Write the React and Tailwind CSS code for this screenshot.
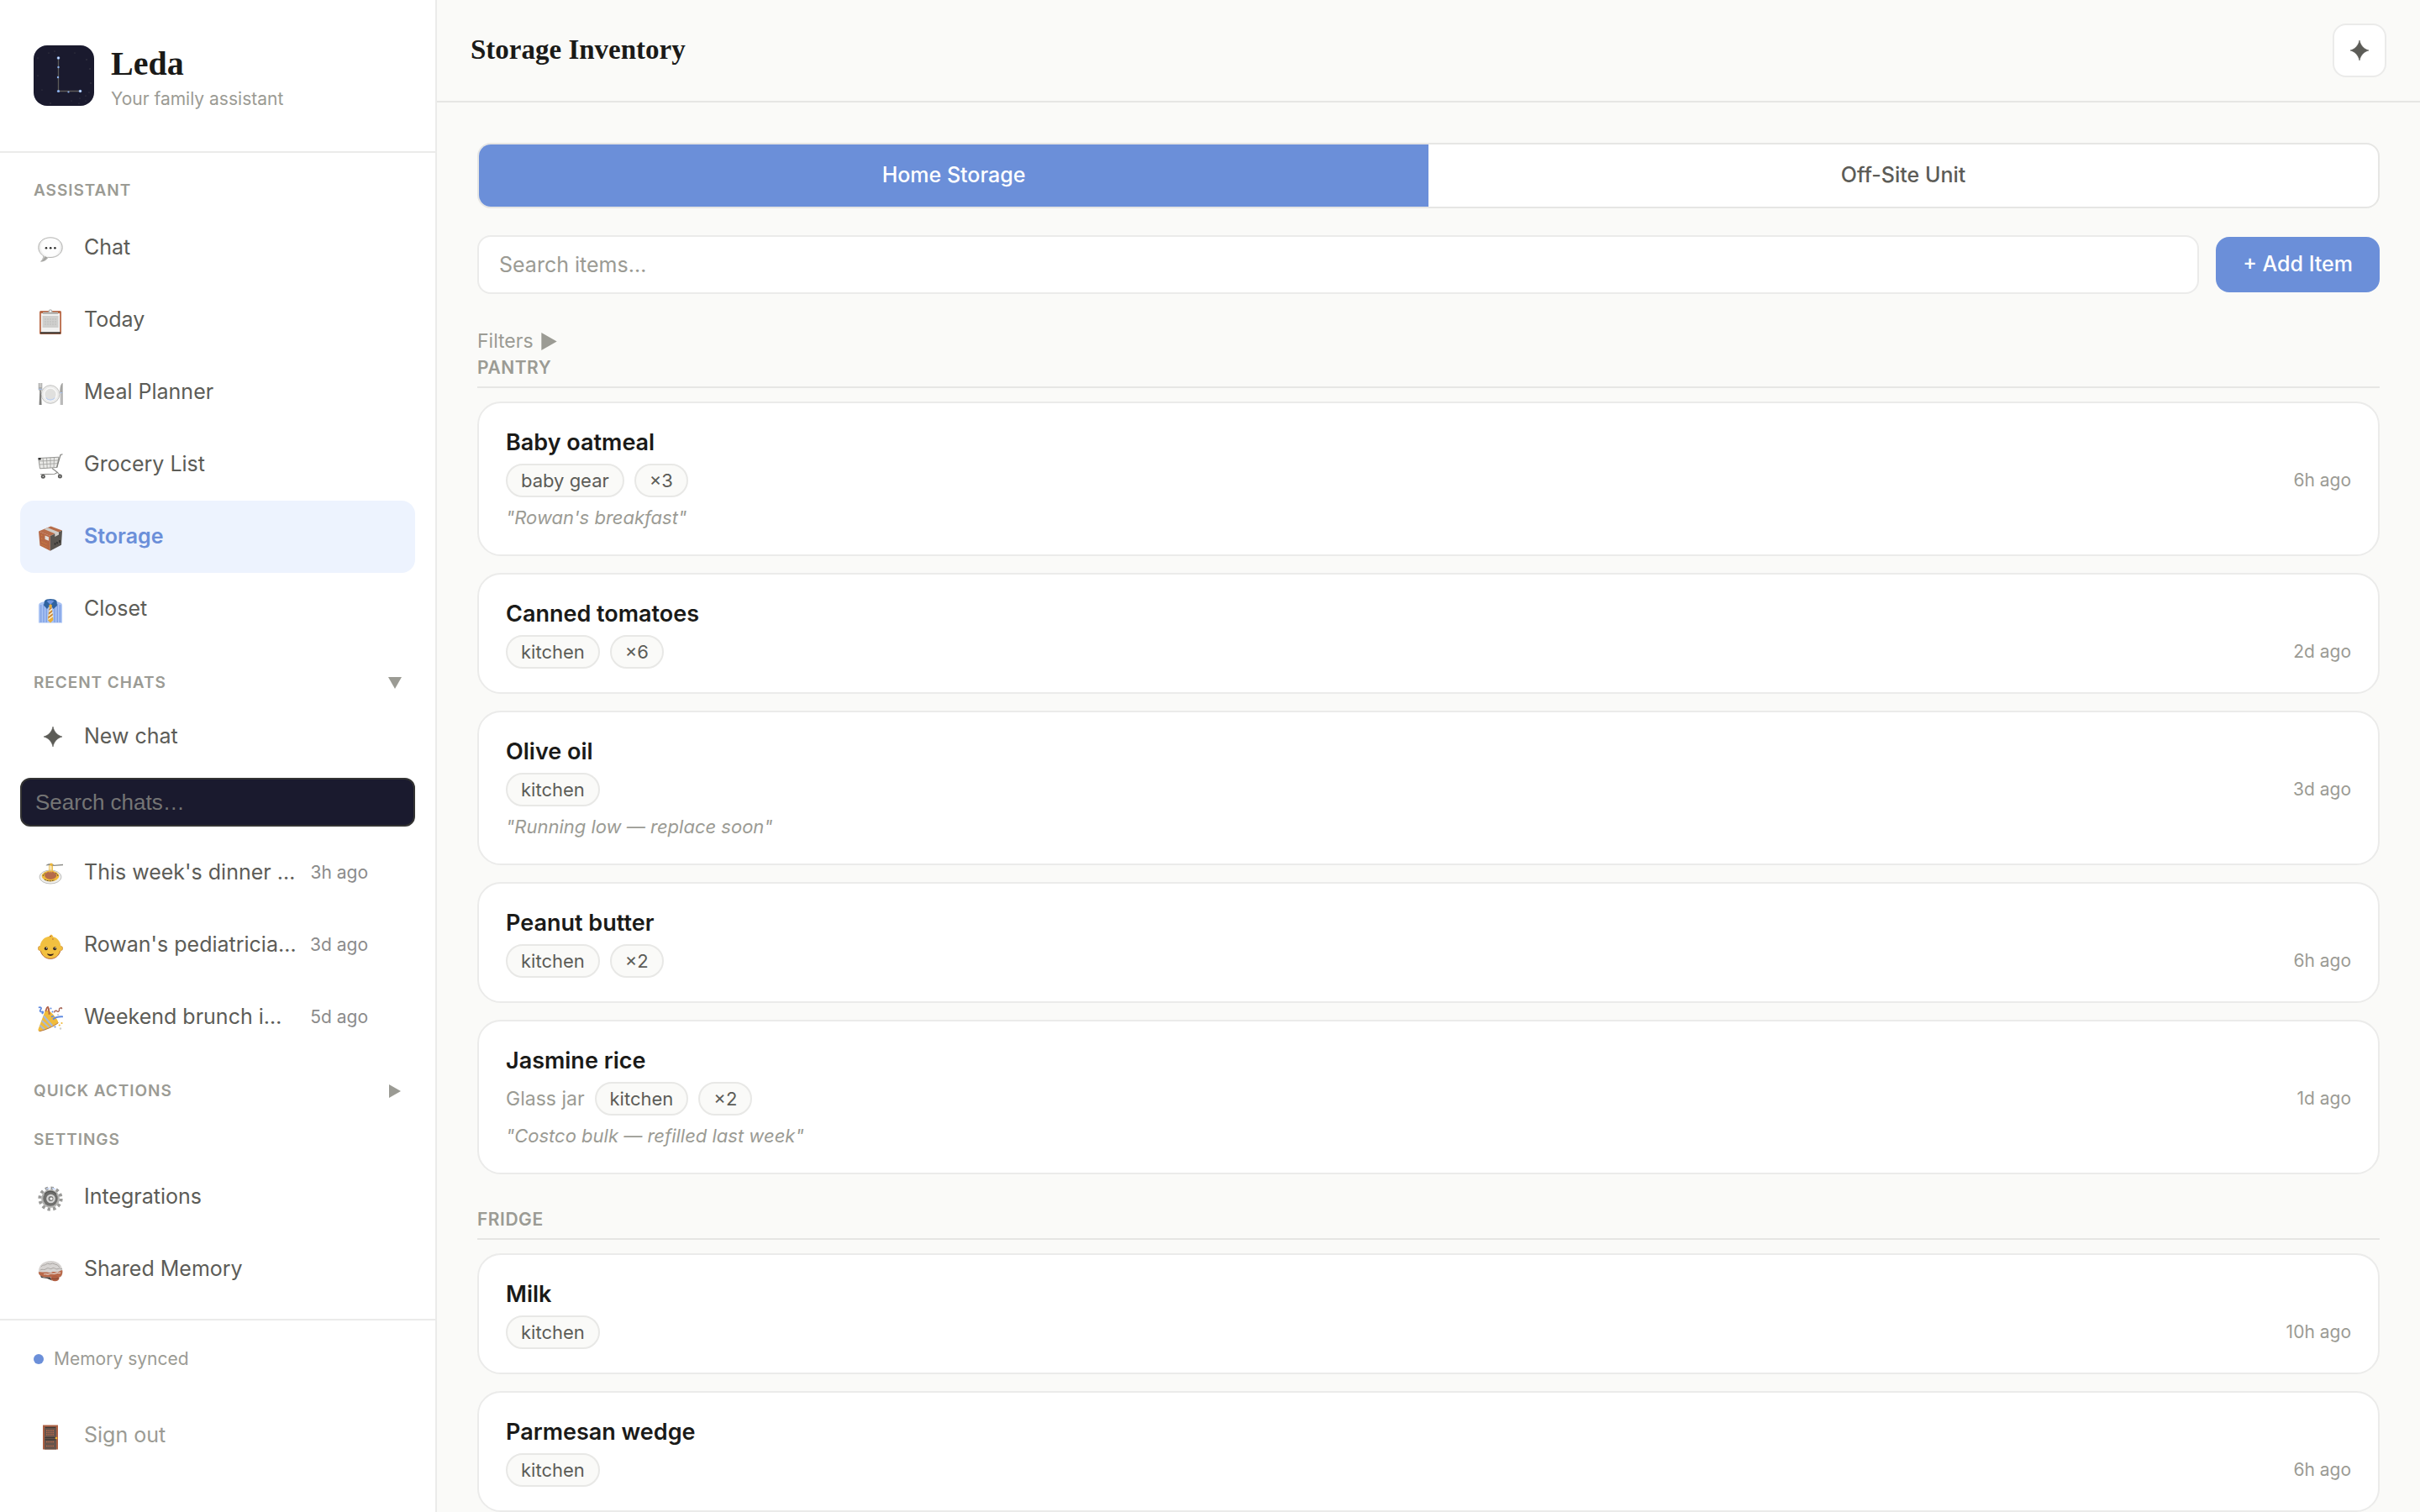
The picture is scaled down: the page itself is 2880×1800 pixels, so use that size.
import React, { useState } from "react";

function Glyph({ children }) {
  return (
    <svg viewBox="0 0 30 30" className="mt-1 size-[30px] shrink-0" aria-hidden="true">
      {children}
    </svg>
  );
}

const ChatIcon = () => (
  <Glyph>
    <defs>
      <radialGradient id="bubble" cx="0.5" cy="0.4" r="0.62">
        <stop offset="0.6" stopColor="#fdfdfd" />
        <stop offset="1" stopColor="#c6c6c4" />
      </radialGradient>
    </defs>
    <path d="M15 .8C6.8.8.8 5.8.8 12.600c0 4.500 2.400 8 6 10.100-.2 2.600-1.300 4.800-3.200 6.600 3.600-.2 6.600-1.900 8.600-4.900 1 .1 1.800.1 2.800.1 8.200 0 14.200-5 14.200-11.900S23.200.8 15 .8Z" fill="url(#bubble)" stroke="#b4b4b2" strokeWidth="1" />
    <path d="M4 29c3-2 4-4.500 3.900-6l4 1.400c-2 2.800-4.700 4.400-7.900 4.600Z" fill="#a3a3a0" />
    <g fill="#2d2d2b">
      <circle cx="10" cy="13.200" r="1.300" />
      <circle cx="15.200" cy="13.200" r="1.300" />
      <circle cx="20.400" cy="13.200" r="1.300" />
    </g>
  </Glyph>
);

const ClipboardIcon = () => (
  <Glyph>
    <rect x="2" y="2" width="26" height="28" rx="1.500" fill="#b96a48" />
    <rect x="3.800" y="5" width="22.400" height="22.500" fill="#f1f1f0" />
    <rect x="5.500" y="8" width="19" height="14" fill="#cfcfcd" />
    <path d="M8 12h14M8 15h14M8 18h14" stroke="#bdbdba" strokeDasharray="2 1" />
    <path d="M3 28.300h24" stroke="#3a3a38" strokeWidth="2" />
    <path d="M6 6V3.500h6.500C12.500 1 13.600.3 15 .3s2.500.7 2.500 3.200H24V6Z" fill="#b4b4b1" />
    <circle cx="15" cy="2.600" r="1.100" fill="#fff" />
  </Glyph>
);

const MealIcon = () => (
  <Glyph>
    <circle cx="15" cy="15.500" r="10.800" fill="#ececeb" stroke="#c4c4c2" />
    <circle cx="15" cy="15.500" r="7.300" fill="#e0e0de" stroke="#fafafa" strokeWidth="1.300" />
    <path d="M9.500 19.500a7 7 0 0 0 11 0" fill="none" stroke="#b9cdf0" strokeWidth="1.200" />
    <path d="M.7 2h4.600v7.500L4 11.500H2L.7 9.500Z" fill="#a9a9a7" />
    <path d="M2.200 2v5M3.800 2v5" stroke="#f5f5f5" strokeWidth=".6" />
    <path d="M2.300 11h1.500l.8 17H1.600Z" fill="#7e7e7c" />
    <path d="M.9 9.300h4.200" stroke="#a7c0ee" />
    <path d="M29.300 2c-2.200 1-3 5.500-3 11.500h2V28h1.400V2Z" fill="#a5a5a3" />
    <path d="M26.600 13.500h2.800L29.600 28h-2.900Z" fill="#bababa" />
    <path d="M26.400 13.600h3" stroke="#a7c0ee" />
  </Glyph>
);

const CartIcon = () => (
  <Glyph>
    <path d="M.8 5.500 25 4.200l-2.300 12.300-20.200 1.300Z" fill="#e9e9e7" stroke="#8c8c89" strokeWidth=".9" />
    <path d="M1.500 9 24.300 8M2 13l21.500-1.300M6 5.300l1.200 12.200M10.500 5l.7 12.200M15 4.800V17M19.500 4.600 19 16.600" stroke="#9d9d9a" strokeWidth=".8" />
    <path d="M29.500.7 27 1.500 22.700 16.500" fill="none" stroke="#80807d" strokeWidth="1.200" />
    <path d="M17 17.500 23.500 22.500 20 24.300 3 24.800M23.500 22.500l2 2.500" fill="none" stroke="#8a8a87" strokeWidth="1.100" />
    <path d="M.5 5h3.200v2.400H.8Z" fill="#333" />
    <circle cx="6.300" cy="27.300" r="2.500" fill="#5a5a58" />
    <circle cx="26.400" cy="27" r="2.500" fill="#5a5a58" />
    <circle cx="6.300" cy="27.300" r=".8" fill="#ddd" />
    <circle cx="26.400" cy="27" r=".8" fill="#ddd" />
  </Glyph>
);

const BoxIcon = () => (
  <Glyph>
    <path d="M1 6.500 15.500.5 29 5.500 14.800 12Z" fill="#b76c49" />
    <path d="M1 6.500 14.800 12v17.700L2.500 23.500Z" fill="#b56643" />
    <path d="M14.800 12 29 5.500 28 22.800 14.800 29.700Z" fill="#595550" />
    <path d="m7.500 4 4.300-1.800L25 7.400v3.200L20.300 13V9.200Z" fill="#cfccc8" />
    <path d="M8.500 11.500 13 13.300v4.500L8.500 16Z" fill="#e0dcd8" />
    <path d="m4 11 2.500 1M4 15l2.500 1M4.500 19l7 3M4.500 22.500l7 3.200" stroke="#d8953e" strokeWidth=".8" strokeDasharray="1.300 1.200" />
    <path d="M20.500 22.500v-2M23 21.300v-2M26 20v-3" stroke="#222" strokeWidth="1.300" />
  </Glyph>
);

const ShirtIcon = () => (
  <Glyph>
    <path d="M1 9C1 6 3.500 5 8 4h14c4.500 1 7 2 7 5v20.500H1Z" fill="#a9c3f3" />
    <path d="M3.800 8v21M7 7v22M10.200 8v21M20 8v21M23.200 7v22M26.400 8v21" stroke="#7496e0" strokeWidth="1.100" />
    <path d="M8 3.500C10 .3 20 .3 22.500 3.500L23 9l-4.500 4L15 8l-4 5-4-4.500Z" fill="#2f629f" />
    <path d="M10.500 3.500c2-1.500 7-1.500 9 0L15 8Z" fill="#6c93e0" />
    <path d="m13.200 8.500 1.900-1.200 1.900 1.200-.6 2.700 2 14.800-3.400 3.500L11.800 26l2-14.800Z" fill="#ecae35" />
    <path d="m13.300 16 3.600-3M12.700 21l5-4M12.400 25.500l5.800-4.300" stroke="#f6f0e2" strokeWidth="1.200" />
    <path d="m13.400 14 3-2.500M13 18.700l4.300-3.400M12.600 23.300l5-4" stroke="#a76045" strokeWidth=".9" />
  </Glyph>
);

const PastaIcon = () => (
  <Glyph>
    <ellipse cx="15" cy="18" rx="13" ry="8" fill="#efefee" stroke="#bfbfbd" />
    <ellipse cx="15" cy="17" rx="10.300" ry="6.500" fill="#f0b93a" />
    <path d="M6 17c1-2 2-3 4-4M8 21c3 2 8 2.500 12 .5M24 17c-.5-2-1.500-3-3-3.800" fill="none" stroke="#4f4a3a" strokeWidth=".9" strokeDasharray="2 1" />
    <ellipse cx="15.200" cy="16.300" rx="7" ry="4.700" fill="#b56b4b" />
    <path d="M13.700 12.500V4M16 12.500V3M17.500 11V4" stroke="#eec04c" strokeWidth="1.100" />
    <path d="M9.500 4.500c2-2.500 6-3 8-2l2 1.200L30 2.800v1.400L19 5l-4-1Z" fill="#8b8b86" />
    <circle cx="16" cy="3.200" r="1.700" fill="#edb63a" />
  </Glyph>
);

const BabyIcon = () => (
  <Glyph>
    <circle cx="3" cy="17" r="2.700" fill="#f0bd3d" stroke="#c98a3f" strokeWidth=".6" />
    <circle cx="27" cy="17" r="2.700" fill="#f0bd3d" stroke="#c98a3f" strokeWidth=".6" />
    <path d="M15 2.800C22 2.800 27.500 8 27.500 16.500 27.500 24 22 29.500 15 29.500S2.500 24 2.500 16.500C2.500 8 8 2.800 15 2.800Z" fill="#f2c040" />
    <path d="M3.300 20C5 26 9.500 29.400 15 29.400S25 26 26.700 20" fill="none" stroke="#b2613a" strokeWidth=".9" />
    <path d="M12.300 4C13.500 2.800 14.500 1.700 15.800.5c1.700.5 2.700 2 2.200 3.800Z" fill="#efb93c" />
    <path d="M14 2.600h2M17 6h1.800" stroke="#b5673f" />
    <circle cx="9.800" cy="17.300" r="2" fill="#332822" />
    <circle cx="20.200" cy="17.300" r="2" fill="#332822" />
    <circle cx="10.500" cy="16.600" r=".7" fill="#fff" />
    <circle cx="20.900" cy="16.600" r=".7" fill="#fff" />
    <path d="M11 23.300c2.500.9 5.500.9 8 0-.6 2-2 2.600-4 2.600s-3.400-.6-4-2.600Z" fill="#3b211a" />
  </Glyph>
);

const PartyIcon = () => (
  <Glyph>
    <path d="M8.500 6C10 3.500 14 5 18 9.500s7 8.500 6 10.500C19 24 8 28.500 1.500 29.800.3 29 .3 28 .6 27Z" fill="#f0bb3b" />
    <path d="m7 11.500 10.500 12M4.800 17l9 8.500M2.600 22.500l6 5.500" stroke="#a9b9d6" strokeWidth="2.200" />
    <path d="M24.500 19.500C19 24 8 28.500 1.500 29.800" fill="none" stroke="#b9793f" />
    <path d="M9 6C11 3.500 9.500 2 12 .7c2 2.800 1.500 5.300 1.500 9M12.500 2.500l1.500 7" fill="none" stroke="#b26349" strokeWidth="1.800" />
    <path d="M.8 1.500c3-1 4 .5 2.500 2.500s0 3 2.200 2.500-.5 2.500-.5 2.500M18 15.500c3-3 6-3.500 12-3.200M16 12.500l3-1" fill="none" stroke="#5f8ae0" strokeWidth="1.800" />
    <path d="M19.500 7.500c.5-3 3-2.500 3.500-1.500s3 0 2.500-2 2-2.500 3.500-1M28 1v2" fill="none" stroke="#a8695a" strokeWidth="1.400" />
    <g>
      <circle cx="15.500" cy="2.600" r="1" fill="#5f8ae0" />
      <circle cx="17.500" cy="6.500" r="1" fill="#5f8ae0" />
      <circle cx="24" cy="10" r=".9" fill="#c3c3c0" />
      <circle cx="28.500" cy="20" r="1.100" fill="#f0bb3b" />
      <circle cx="25.800" cy="22.500" r="1.100" fill="#f0bb3b" />
      <circle cx="27" cy="26.500" r="1.200" fill="#cfcfcd" />
      <circle cx="20.500" cy="24.500" r="1" fill="#5f8ae0" />
    </g>
  </Glyph>
);

const GearIcon = () => (
  <Glyph>
    <circle cx="15" cy="15" r="12.600" fill="none" stroke="#9a9a98" strokeWidth="4" strokeDasharray="3.300 3.300" />
    <circle cx="15" cy="15" r="10.800" fill="#b3b3b1" />
    <circle cx="15" cy="15" r="8.700" fill="#6e6e6c" />
    <path d="M8 9.800a8.700 8.700 0 0 1 14 0" fill="none" stroke="#565654" strokeWidth="1.300" />
    <circle cx="15.500" cy="15" r="5.300" fill="#d4d4d3" />
    <circle cx="15.500" cy="15" r="3" fill="#7a7a78" />
    <circle cx="16" cy="15" r="1.600" fill="#fff" />
    <path d="M10 3.600l4-1.500M17 2.500l4 1.300" stroke="#c5d6f7" strokeWidth="1.500" />
  </Glyph>
);

const BrainIcon = () => (
  <Glyph>
    <path d="M.8 16C1 8 7 3 15.500 3S29.500 8.500 29.500 16c0 3.500-1 6-3.500 6.500H9C4 22 .8 20 .8 16Z" fill="#d6d3d1" />
    <path d="M.8 16.500c3-1 5 .5 8 0s5 1.500 8 0 5 1.200 8-.5 3-2 4.500-1.500c.3 4-1 7.500-3.500 8H10C4.500 22.500 1 20 .8 16.500Z" fill="#b9694a" />
    <path d="M4 10c2-3 4-1 6-3s4 1 6-.5 4 1 6 1 2 2.500 4 3M3 14c3-2 4 1 7-1.500s4 1.500 7-.5 4 2 7 .5 3 1 5 0" fill="none" stroke="#aaa6a3" strokeWidth="1" />
    <path d="M7 19c3-1 4 1 7-.5s4 1 7-.5 4 .5 6-1" fill="none" stroke="#e2d3cb" strokeWidth="1.200" />
    <path d="M3 20.500 7 22.500h8l2 4-6-2.500-7-1Z" fill="#474341" />
    <ellipse cx="20.500" cy="23.800" rx="5" ry="3.400" fill="#b05f42" />
    <path d="M16.500 24c2.500 1 5.500 1 8.500-.5" fill="none" stroke="#7d4633" />
  </Glyph>
);

const DoorIcon = () => (
  <Glyph>
    <rect x="6" y=".5" width="18" height="29" fill="#ad6042" />
    <rect x="8" y="2.500" width="14" height="27" fill="#67544b" />
    <path d="M10 7h10M10 9.500h10M10 12h10M10 20.500h10M10 25.500h10" stroke="#b9694a" strokeWidth="1.300" strokeDasharray="1.500 1" />
    <path d="M8.500 15.500h13M8.500 17.800h13M9 3.500h12" stroke="#3d3733" strokeWidth="1.200" />
    <circle cx="22" cy="16" r="1.300" fill="#efb62f" />
  </Glyph>
);

const star = "M12 0C13 5.500 17 10.500 23 12 17 13.500 13 18.500 12 24 11 18.500 7 13.500 1 12 7 10.500 11 5.500 12 0Z";

const StarIcon = () => (
  <svg viewBox="0 0 24 24" className="size-6 shrink-0" fill="#5c5c57" stroke="#5c5c57" strokeWidth=".6" aria-hidden="true">
    <path d={star} />
  </svg>
);

const NewChatIcon = () => (
  <span className="flex w-[30px] shrink-0 justify-end">
    <StarIcon />
  </span>
);

function Triangle({ down, className }) {
  return (
    <svg viewBox="0 0 16 16" className={className} fill="#9b9b94" aria-hidden="true">
      <path d={down ? "M0 1h16L8 15Z" : "M1 0v16L15 8Z"} />
    </svg>
  );
}

function Logo() {
  return (
    <svg viewBox="0 0 72 72" className="size-[72px] shrink-0" aria-hidden="true">
      <rect width="72" height="72" rx="16" fill="#1a1a2e" />
      <path d="M29.500 15v39.500h26" fill="none" stroke="#5b5a58" strokeWidth="1.300" />
      <g fill="#8db2ee">
        <circle cx="29.500" cy="15" r="1.800" />
        <circle cx="29.500" cy="26" r="1.200" />
        <circle cx="29" cy="38" r="1.200" />
        <circle cx="29.500" cy="54.500" r="1.600" />
        <circle cx="41.500" cy="55.500" r="1.100" />
        <circle cx="55.500" cy="54.500" r="1.800" />
      </g>
      <circle cx="29.500" cy="15" r=".8" fill="#fff" />
      <circle cx="55.500" cy="54.500" r=".8" fill="#fff" />
      <g fill="#4a4a52">
        <circle cx="18" cy="9" r=".6" />
        <circle cx="25" cy="7" r=".6" />
        <circle cx="49" cy="9" r=".6" />
        <circle cx="63" cy="17" r=".7" />
        <circle cx="67" cy="28" r=".7" />
        <circle cx="5" cy="15" r=".6" />
        <circle cx="5" cy="36" r=".6" />
        <circle cx="10" cy="53" r=".6" />
        <circle cx="20" cy="69" r=".7" />
        <circle cx="45" cy="66" r=".6" />
        <circle cx="55" cy="63" r=".6" />
        <circle cx="54" cy="69" r=".6" />
        <circle cx="62" cy="66" r=".6" />
        <circle cx="66" cy="56" r=".6" />
        <circle cx="68" cy="45" r=".7" />
        <circle cx="62" cy="60" r=".6" />
      </g>
    </svg>
  );
}

function NavLabel({ children, className }) {
  return (
    <h2
      className={
        "flex h-[50px] items-center px-4 text-[19px] font-semibold uppercase tracking-wider text-[#9b9b94] " + className
      }
    >
      {children}
    </h2>
  );
}

function NavToggle({ children, open, onClick }) {
  return (
    <h2 className="mt-5">
      <button
        type="button"
        aria-expanded={open}
        onClick={onClick}
        className="flex h-[50px] w-full items-center justify-between px-4 text-[19px] font-semibold uppercase tracking-wider text-[#9b9b94]"
      >
        {children}
        <Triangle down={open} className="size-4" />
      </button>
    </h2>
  );
}

function NavItem({ icon: Icon, label, active, time, className }) {
  return (
    <a
      href="#"
      aria-current={active ? "page" : undefined}
      className={
        "flex items-center gap-[25px] rounded-2xl pl-[21px] text-[25px] " +
        (active ? "bg-[#edf3fe] font-semibold text-[#6b8fd9] " : "text-[#5c5c57] ") +
        (time ? "pr-14 " : "pr-4 ") +
        (className || "h-[86px]")
      }
    >
      <Icon />
      <span className="min-w-0 flex-1 whitespace-nowrap">{label}</span>
      {time && <time className="shrink-0 text-[21px] text-[#8b8b8b]">{time}</time>}
    </a>
  );
}

const assistantLinks = [
  { icon: ChatIcon, label: "Chat" },
  { icon: ClipboardIcon, label: "Today" },
  { icon: MealIcon, label: "Meal Planner" },
  { icon: CartIcon, label: "Grocery List" },
  { icon: BoxIcon, label: "Storage", active: true },
  { icon: ShirtIcon, label: "Closet" },
];

const chats = [
  { icon: PastaIcon, label: "This week's dinner …", time: "3h ago" },
  { icon: BabyIcon, label: "Rowan's pediatricia…", time: "3d ago" },
  { icon: PartyIcon, label: "Weekend brunch i…", time: "5d ago" },
];

const sections = [
  {
    name: "Pantry",
    items: [
      { name: "Baby oatmeal", tags: ["baby gear", "×3"], note: "Rowan's breakfast", time: "6h ago" },
      { name: "Canned tomatoes", tags: ["kitchen", "×6"], time: "2d ago" },
      { name: "Olive oil", tags: ["kitchen"], note: "Running low — replace soon", time: "3d ago" },
      { name: "Peanut butter", tags: ["kitchen", "×2"], time: "6h ago" },
      { name: "Jasmine rice", place: "Glass jar", tags: ["kitchen", "×2"], note: "Costco bulk — refilled last week", time: "1d ago" },
    ],
  },
  {
    name: "Fridge",
    items: [
      { name: "Milk", tags: ["kitchen"], time: "10h ago" },
      { name: "Parmesan wedge", tags: ["kitchen"], time: "6h ago" },
    ],
  },
];

function Sidebar() {
  const [chatsOpen, setChatsOpen] = useState(true);
  const [actionsOpen, setActionsOpen] = useState(false);
  return (
    <aside className="flex w-[520px] shrink-0 flex-col border-r-2 border-[#ebebea] bg-white">
      <div className="flex h-[182px] shrink-0 items-center gap-5 border-b-2 border-[#ebebea] px-10">
        <Logo />
        <div>
          <p className="font-['Liberation_Serif',serif] text-[40px] font-bold leading-[56px] text-[#1a1a18]">Leda</p>
          <p className="text-[21px] leading-7 text-[#9b9b94]">Your family assistant</p>
        </div>
      </div>

      <nav className="min-h-0 flex-1 overflow-y-auto px-6 [scrollbar-width:none]">
        <NavLabel className="mt-5">Assistant</NavLabel>
        {assistantLinks.map((link) => (
          <NavItem key={link.label} {...link} />
        ))}

        <NavToggle open={chatsOpen} onClick={() => setChatsOpen(!chatsOpen)}>
          Recent chats
        </NavToggle>
        {chatsOpen && (
          <>
            <NavItem icon={NewChatIcon} label="New chat" className="h-[78px]" />
            <input
              type="search"
              aria-label="Search chats"
              placeholder="Search chats…"
              className="mb-3 mt-[10px] block h-[58px] w-full rounded-xl border-2 border-[#333333] bg-[#1a1a2e] px-4 font-['Liberation_Sans',sans-serif] text-[26px] text-white placeholder:text-[#757575]"
            />
            {chats.map((chat) => (
              <NavItem key={chat.label} {...chat} />
            ))}
          </>
        )}

        <NavToggle open={actionsOpen} onClick={() => setActionsOpen(!actionsOpen)}>
          Quick actions
        </NavToggle>
        <NavLabel className="mt-2">Settings</NavLabel>
        <NavItem icon={GearIcon} label="Integrations" />
        <NavItem icon={BrainIcon} label="Shared Memory" />
      </nav>

      <div className="shrink-0 border-t-2 border-[#ebebea] px-6 pb-12 pt-7">
        <p className="flex h-9 items-center gap-3 px-4 text-[21px] text-[#9b9b94]">
          <span className="size-3 rounded-full bg-[#6b8fd9]" />
          Memory synced
        </p>
        <button
          type="button"
          className="mt-[30px] flex h-[86px] w-full items-center gap-[25px] pl-[21px] text-[25px] text-[#9b9b94]"
        >
          <DoorIcon />
          Sign out
        </button>
      </div>
    </aside>
  );
}

function ItemCard({ name, place, tags, note, time }) {
  return (
    <li className="rounded-[28px] border-2 border-[#ebebea] bg-white px-8 py-7">
      <h3 className="mb-[6px] text-[27px] font-semibold leading-[38px] text-[#1a1a18]">{name}</h3>
      <div className="flex h-10 items-center gap-3">
        {place && <span className="text-[23px] text-[#9b9b94]">{place}</span>}
        {tags.map((tag) => (
          <span
            key={tag}
            className="flex h-10 items-center rounded-full border-2 border-[#e8e8e6] bg-[#fafaf8] px-4 text-[22px] text-[#5c5c57]"
          >
            {tag}
          </span>
        ))}
        <time className="ml-auto text-[21px] text-[#9b9b94]">{time}</time>
      </div>
      {note && <p className="mt-2 text-[22px] italic leading-8 text-[#9b9b94]">"{note}"</p>}
    </li>
  );
}

export default function App() {
  const [tab, setTab] = useState("Home Storage");
  return (
    <div className="flex h-screen overflow-hidden bg-[#fafaf8] font-[Inter,sans-serif]">
      <Sidebar />
      <main className="flex min-w-0 flex-1 flex-col">
        <header className="flex h-[122px] shrink-0 items-center justify-between border-b-2 border-[#e6e6e4] px-10">
          <h1 className="font-['Liberation_Serif',serif] text-[33px] font-bold text-[#1a1a18]">Storage Inventory</h1>
          <button
            type="button"
            aria-label="New chat"
            className="flex size-16 items-center justify-center rounded-2xl border-2 border-[#ebebea] bg-white"
          >
            <StarIcon />
          </button>
        </header>

        <div className="min-h-0 flex-1 overflow-y-auto p-12 [scrollbar-width:none]">
          <div role="tablist" className="flex h-[78px] overflow-hidden rounded-2xl border-2 border-[#e6e6e4] bg-white">
            {["Home Storage", "Off-Site Unit"].map((name) => (
              <button
                key={name}
                type="button"
                role="tab"
                aria-selected={tab === name}
                onClick={() => setTab(name)}
                className={
                  "flex-1 text-[25px] font-medium " +
                  (tab === name ? "bg-[#6b8fd9] text-white" : "text-[#5c5c57]")
                }
              >
                {name}
              </button>
            ))}
          </div>

          <div className="mt-8 flex items-center gap-5">
            <input
              type="text"
              aria-label="Search items"
              placeholder="Search items…"
              className="h-[70px] min-w-0 flex-1 rounded-2xl border-2 border-[#ebebea] bg-white px-6 text-[25px] text-[#1a1a18] placeholder:text-[#9b9b94]"
            />
            <button type="button" className="h-[66px] rounded-2xl bg-[#6b8fd9] px-8 text-[25px] font-medium text-white">
              + Add Item
            </button>
          </div>

          <button type="button" className="mt-10 flex h-8 items-center gap-2 text-[23px] text-[#9b9b94]">
            Filters
            <Triangle className="size-[21px]" />
          </button>

          <div className="flex flex-col gap-[38px]">
            {sections.map((section) => (
              <section key={section.name}>
                <h2 className="border-b-2 border-[#e6e6e4] pb-[6px] text-[21px] font-semibold uppercase leading-8 tracking-wide text-[#9b9b94]">
                  {section.name}
                </h2>
                <ul className="mt-4 flex flex-col gap-5">
                  {section.items.map((item) => (
                    <ItemCard key={item.name} {...item} />
                  ))}
                </ul>
              </section>
            ))}
          </div>
        </div>
      </main>
    </div>
  );
}
